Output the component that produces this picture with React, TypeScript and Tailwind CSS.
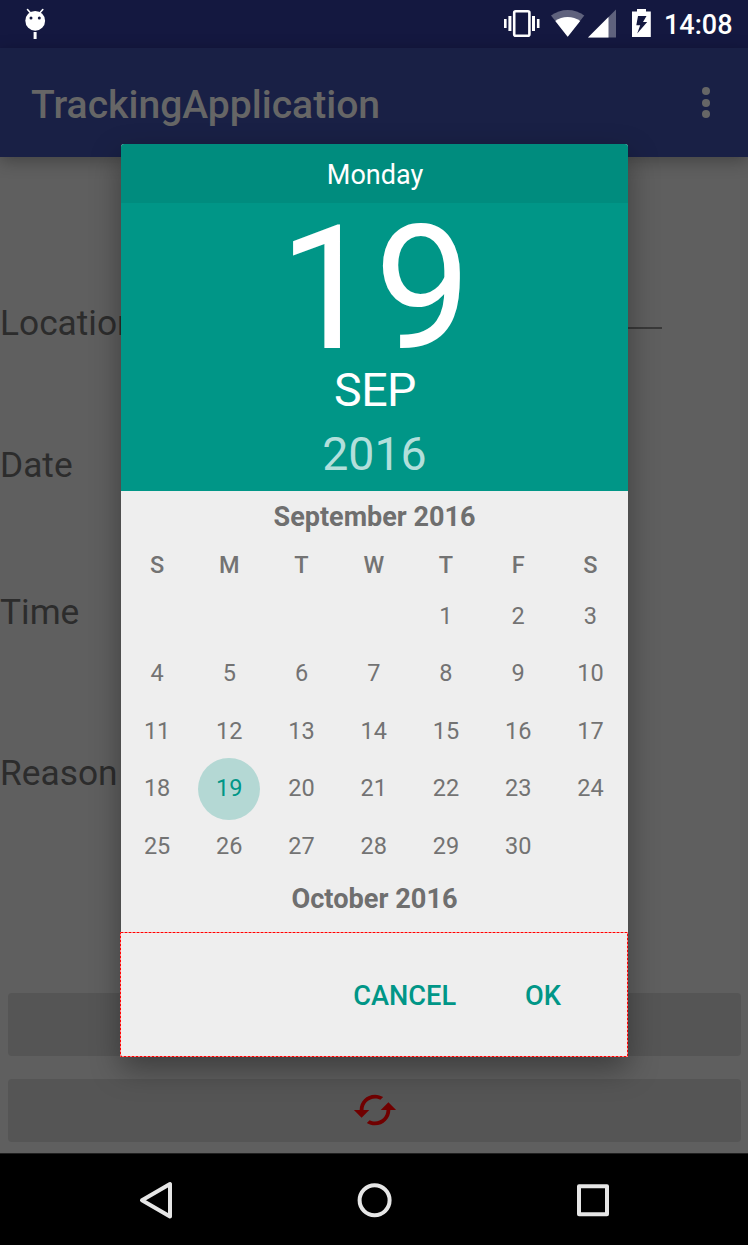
import React from "react";

const weekdays = ["S", "M", "T", "W", "T", "F", "S"];
const leading = 4;
const days: (number | null)[] = Array.from({ length: 35 }, (_, i) =>
  i < leading || i - leading >= 30 ? null : i - leading + 1
);

function StatusBar() {
  return (
    <div className="flex h-12 shrink-0 items-center bg-[#141840] text-white">
      <svg className="ml-[20px]" width="30" height="48" viewBox="20 0 30 48">
        <path d="M27.5 9.5l3.5 4M42.8 9.5l-3.5 4" stroke="#fff" strokeWidth="1.6" strokeLinecap="round" />
        <circle cx="35.2" cy="20.8" r="9.9" fill="#fff" />
        <rect x="33.6" y="32" width="3" height="7" fill="#fff" />
        <circle cx="31" cy="18" r="1.5" fill="#141840" />
        <circle cx="39.3" cy="18" r="1.5" fill="#141840" />
      </svg>
      <svg className="ml-[450px]" width="156" height="48" viewBox="500 0 156 48" fill="#fff">
        <rect x="514.2" y="11.2" width="15.2" height="24.6" rx="1.5" fill="none" stroke="#fff" strokeWidth="2.6" />
        <path d="M504 19h2.6v9H504zM508.4 16h3v15h-3zM532 16h3v15h-3zM536.9 19h2.6v9h-2.6z" />
        <path d="M551 15.5C560.5 8 575 8 584.3 15.5L567.7 36.7z" opacity=".32" />
        <path d="M555.3 21C562 15.7 573 15.7 580.2 21L567.7 36.7z" />
        <path d="M616 9.5V37.5H588z" opacity=".32" />
        <path d="M608.5 17V37.5H588z" />
        <path fillRule="evenodd" d="M637 9h9v2.5h4.8V37H632V11.5h5zM638 16l-1.7 9.3h3.9l-3 8.2 10-11.5h-4.2l3.5-6z" />
      </svg>
      <span className="ml-[8px] pt-[2px] text-[27px] font-medium leading-[48px]">14:08</span>
    </div>
  );
}

function DatePicker() {
  return (
    <div className="absolute left-[121px] top-[144px] flex h-[913px] w-[507px] flex-col rounded-[3px] bg-[#eeeeee] shadow-[0_12px_30px_rgba(0,0,0,0.36)]">
      <div className="h-[59px] rounded-t-[3px] bg-[#008c7e] pl-px text-center text-[27px] leading-[63px] text-white">Monday</div>
      <div className="flex h-[288px] flex-col bg-[#009687] pt-[8px] text-center text-white">
        <div className="h-[157px] text-[172px] leading-[157px] tracking-[-1px]">19</div>
        <div className="pl-px text-[46.5px] leading-[45px] tracking-[-0.5px]">SEP</div>
        <div className="mt-[9px] text-[46.5px] leading-[64px] text-[#b2dfdb]">2016</div>
      </div>
      <div className="h-[52px] text-center text-[27px] font-bold leading-[53px] text-[#6f6f6f]">September 2016</div>
      <div className="grid grid-cols-7 pr-[1.5px] text-center text-[23.5px] text-[#737373]">
        {weekdays.map((d, i) => (
          <div key={i} className="h-[44.5px] font-medium leading-[44px]">{d}</div>
        ))}
        {days.map((d, i) => (
          <div key={i} className="flex h-[57.5px] items-center justify-center">
            {d === 19 ? (
              <span className="flex size-[62px] shrink-0 items-center justify-center rounded-full bg-[#b4d8d4] text-[#009687]">19</span>
            ) : (
              d
            )}
          </div>
        ))}
      </div>
      <div className="h-[57px] text-center text-[27.2px] font-bold leading-[49px] text-[#6f6f6f]">October 2016</div>
      <svg className="absolute -left-px top-[788px]" width="508" height="125" fill="none">
        <rect x=".5" y=".5" width="507" height="124" stroke="#fff" />
        <rect x=".5" y=".5" width="507" height="124" stroke="#f00" strokeDasharray="3 1" />
      </svg>
      <div className="flex h-[125px] justify-end pr-[67px] text-[27.2px] font-medium leading-[129px] text-[#009687]">
        <button className="mr-[69px]">CANCEL</button>
        <button>OK</button>
      </div>
    </div>
  );
}

export default function App() {
  return (
    <div className="relative flex h-[1245px] w-[748px] flex-col overflow-hidden bg-[#5f5f5f] font-['Roboto',sans-serif]">
      <StatusBar />
      <header className="flex h-[109px] shrink-0 items-center justify-between bg-[#192045] pl-[31px] pr-[38px] text-[#666666] shadow-[0_4px_16px_rgba(0,0,0,0.3)]">
        <h1 className="pt-[5px] text-[39.1px] font-medium leading-[104px]">TrackingApplication</h1>
        <div className="flex flex-col gap-[3.7px]">
          <i className="size-[8px] rounded-full bg-[#666666]" />
          <i className="size-[8px] rounded-full bg-[#666666]" />
          <i className="size-[8px] rounded-full bg-[#666666]" />
        </div>
      </header>
      <main className="flex flex-1 flex-col text-[35.3px] leading-[48px] text-[#2c2c2c]">
        <div className="mt-[143px] flex h-[48px] w-[662px] leading-[47px]">
          <span>Location</span>
          <span className="ml-4 mt-[27px] h-[2px] flex-1 bg-[#393939]" />
        </div>
        <div className="mt-[93px]">Date</div>
        <div className="mt-[99px]">Time</div>
        <div className="mt-[113px]">Reason</div>
        <div className="ml-[8px] mt-[196px] mr-[7px] h-[63px] shrink-0 rounded-[4px] bg-[#555555]" />
        <div className="ml-[8px] mt-[23px] mr-[7px] flex h-[63px] shrink-0 items-center justify-center rounded-[4px] bg-[#555555]">
          <svg className="-mt-px" width="46" height="46" viewBox="0 0 24 24" fill="#700000">
            <path d="M19 8l-4 4h3c0 3.310-2.690 6-6 6-1.010 0-1.970-.25-2.800-.7l-1.460 1.460C8.970 19.540 10.430 20 12 20c4.420 0 8-3.580 8-8h3l-4-4zM6 12c0-3.310 2.690-6 6-6 1.010 0 1.970.25 2.800.7l1.460-1.460C15.030 4.460 13.570 4 12 4c-4.420 0-8 3.580-8 8H1l4 4 4-4H6z" />
          </svg>
        </div>
      </main>
      <nav className="h-[92px] shrink-0 border-t border-[#202020] bg-black">
        <svg width="748" height="91" viewBox="0 1154 748 91" fill="none" stroke="#e6e6e6" strokeWidth="4" strokeLinejoin="round">
          <path d="M142 1200.300L170 1184V1216.500z" />
          <circle cx="374.6" cy="1200.2" r="15" />
          <rect x="579" y="1186.3" width="28" height="28" />
        </svg>
      </nav>
      <DatePicker />
    </div>
  );
}
